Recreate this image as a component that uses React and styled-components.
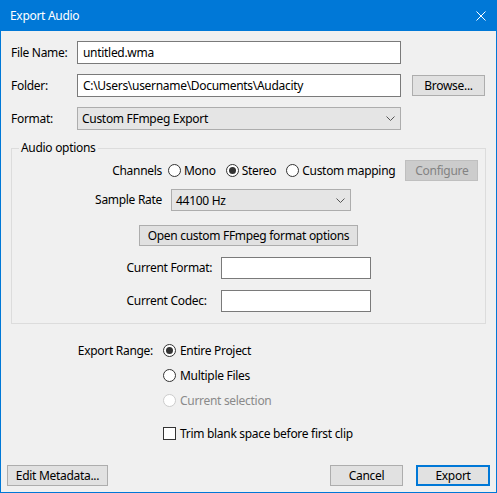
import React from "react";
import styled, { createGlobalStyle } from "styled-components";

const GlobalStyle = createGlobalStyle`
  html, body {
    margin: 0;
    padding: 0;
    background: #f0f0f0;
  }
  body {
    font-family: "Segoe UI", "Noto Sans", sans-serif;
    font-size: 12px;
    letter-spacing: -0.3px;
    color: #000;
  }
  * {
    box-sizing: border-box;
  }
`;

const Window = styled.div`
  width: 497px;
  height: 493px;
  display: flex;
  flex-direction: column;
  background: #f0f0f0;
  border: 1px solid #0078d7;
  border-top: none;
`;

const TitleBar = styled.div`
  height: 31px;
  flex-shrink: 0;
  display: flex;
  align-items: center;
  justify-content: space-between;
  padding: 0 10px 0 9px;
  background: #0078d7;
  color: #fff;
  font-size: 12px;
`;

const Body = styled.div`
  flex: 1;
  padding: 10px 10px 0;
`;

const TopGrid = styled.div`
  display: grid;
  grid-template-columns: 66px 324px 1fr;
  row-gap: 10px;
  align-items: center;
`;

const Label = styled.span`
  line-height: 16px;
  white-space: nowrap;
  text-align: ${(p) => (p.$right ? "right" : "left")};
  color: ${(p) => (p.$disabled ? "#8a8a8a" : "#000")};
`;

const TextBox = styled.div`
  height: ${(p) => p.$h || 23}px;
  display: flex;
  align-items: center;
  padding: 0 5px;
  background: #fff;
  border: 1px solid #7a7a7a;
  white-space: nowrap;
  overflow: hidden;
`;

const Combo = styled.div`
  height: ${(p) => p.$h || 23}px;
  width: ${(p) => (p.$w ? `${p.$w}px` : "auto")};
  margin-left: ${(p) => p.$ml || 0}px;
  display: flex;
  align-items: center;
  justify-content: space-between;
  padding: 0 5px 0 4px;
  background: #e5e5e5;
  border: 1px solid #adadad;
`;

const Button = styled.div`
  height: 21px;
  width: ${(p) => p.$w}px;
  margin-left: ${(p) => p.$ml || 0}px;
  display: flex;
  align-items: center;
  justify-content: center;
  background: ${(p) => (p.$disabled ? "#cccccc" : "#e1e1e1")};
  border: ${(p) =>
    p.$default ? "2px solid #0078d7" : p.$disabled ? "1px solid #bfbfbf" : "1px solid #adadad"};
  color: ${(p) => (p.$disabled ? "#838383" : "#000")};
  white-space: nowrap;
`;

const GroupBox = styled.fieldset`
  margin: 10px 0 0;
  padding: 4px 0 11px;
  border: 1px solid #dcdcdc;
`;

const GroupTitle = styled.legend`
  margin-left: 7px;
  padding: 0 2px;
  line-height: 16px;
`;

const ChannelGrid = styled.div`
  display: grid;
  grid-template-columns: 150px auto;
  column-gap: 6px;
  row-gap: 8px;
  align-items: center;
`;

const RadioRow = styled.div`
  display: flex;
  align-items: center;
  gap: 10px;
`;

const Option = styled.span`
  display: inline-flex;
  align-items: center;
  gap: ${(p) => p.$gap || 3}px;
  line-height: 16px;
  white-space: nowrap;
  color: ${(p) => (p.$disabled ? "#8a8a8a" : "#000")};
`;

const RadioDot = styled.span`
  width: 13px;
  height: 13px;
  flex-shrink: 0;
  border-radius: 50%;
  border: 1px solid ${(p) => (p.$disabled ? "#cccccc" : "#333")};
  background: #fff;
  display: flex;
  align-items: center;
  justify-content: center;
  &::after {
    content: "";
    width: 7px;
    height: 7px;
    border-radius: 50%;
    background: ${(p) => (p.$checked ? "#333" : "transparent")};
  }
`;

const CheckBox = styled.span`
  width: 13px;
  height: 13px;
  flex-shrink: 0;
  border: 1px solid #333;
  background: #fff;
`;

const Centered = styled.div`
  display: flex;
  justify-content: center;
  margin-top: ${(p) => p.$mt || 0}px;
`;

const CodecGrid = styled.div`
  display: grid;
  grid-template-columns: 94px 150px;
  row-gap: 11px;
  justify-content: center;
  align-items: center;
  margin-top: 11px;
`;

const RangeGrid = styled.div`
  display: grid;
  grid-template-columns: 142px auto;
  column-gap: 10px;
  grid-auto-rows: 25px;
  align-items: center;
  margin-top: 14px;
`;

const CheckRow = styled.div`
  grid-column: 2;
  margin-top: 19px;
`;

const Footer = styled.div`
  display: flex;
  align-items: center;
  gap: 13px;
  padding: 0 6px 6px;
`;

const Spacer = styled.div`
  flex: 1;
`;

const Chevron = () => (
  <svg width="9" height="5" viewBox="0 0 9 5">
    <path d="M0.5 0.5 L4.5 4.5 L8.5 0.5" fill="none" stroke="#555" strokeWidth="1" />
  </svg>
);

const CloseIcon = () => (
  <svg width="10" height="10" viewBox="0 0 10 10">
    <path d="M0.5 0.5 L9.5 9.5 M9.5 0.5 L0.5 9.5" stroke="#fff" strokeWidth="1" />
  </svg>
);

const Radio = ({ checked, disabled, gap, children }) => (
  <Option $disabled={disabled} $gap={gap}>
    <RadioDot $checked={checked} $disabled={disabled} />
    {children}
  </Option>
);

const App = () => {
  return (
    <>
      <GlobalStyle />
      <Window>
        <TitleBar>
          <span>Export Audio</span>
          <CloseIcon />
        </TitleBar>
        <Body>
          <TopGrid>
            <Label>File Name:</Label>
            <TextBox>untitled.wma</TextBox>
            <span />
            <Label>Folder:</Label>
            <TextBox>C:\Users\username\Documents\Audacity</TextBox>
            <Button $w={73} $ml={11}>
              Browse...
            </Button>
            <Label>Format:</Label>
            <Combo>
              <span>Custom FFmpeg Export</span>
              <Chevron />
            </Combo>
          </TopGrid>

          <GroupBox>
            <GroupTitle>Audio options</GroupTitle>
            <ChannelGrid>
              <Label $right>Channels</Label>
              <RadioRow>
                <Radio>Mono</Radio>
                <Radio checked>Stereo</Radio>
                <Radio>Custom mapping</Radio>
                <Button $w={73} $disabled>
                  Configure
                </Button>
              </RadioRow>
              <Label $right>Sample Rate</Label>
              <Combo $w={180} $h={22} $ml={3}>
                <span>44100 Hz</span>
                <Chevron />
              </Combo>
            </ChannelGrid>
            <Centered $mt={14}>
              <Button $w={219}>Open custom FFmpeg format options</Button>
            </Centered>
            <CodecGrid>
              <Label>Current Format:</Label>
              <TextBox $h={22} />
              <Label>Current Codec:</Label>
              <TextBox $h={22} />
            </CodecGrid>
          </GroupBox>

          <RangeGrid>
            <Label $right>Export Range:</Label>
            <Radio checked gap={4}>
              Entire Project
            </Radio>
            <span />
            <Radio gap={4}>Multiple Files</Radio>
            <span />
            <Radio disabled gap={4}>
              Current selection
            </Radio>
            <CheckRow>
              <Option $gap={4}>
                <CheckBox />
                Trim blank space before first clip
              </Option>
            </CheckRow>
          </RangeGrid>
        </Body>
        <Footer>
          <Button $w={101}>Edit Metadata...</Button>
          <Spacer />
          <Button $w={73}>Cancel</Button>
          <Button $w={74} $default>
            Export
          </Button>
        </Footer>
      </Window>
    </>
  );
};

export default App;
